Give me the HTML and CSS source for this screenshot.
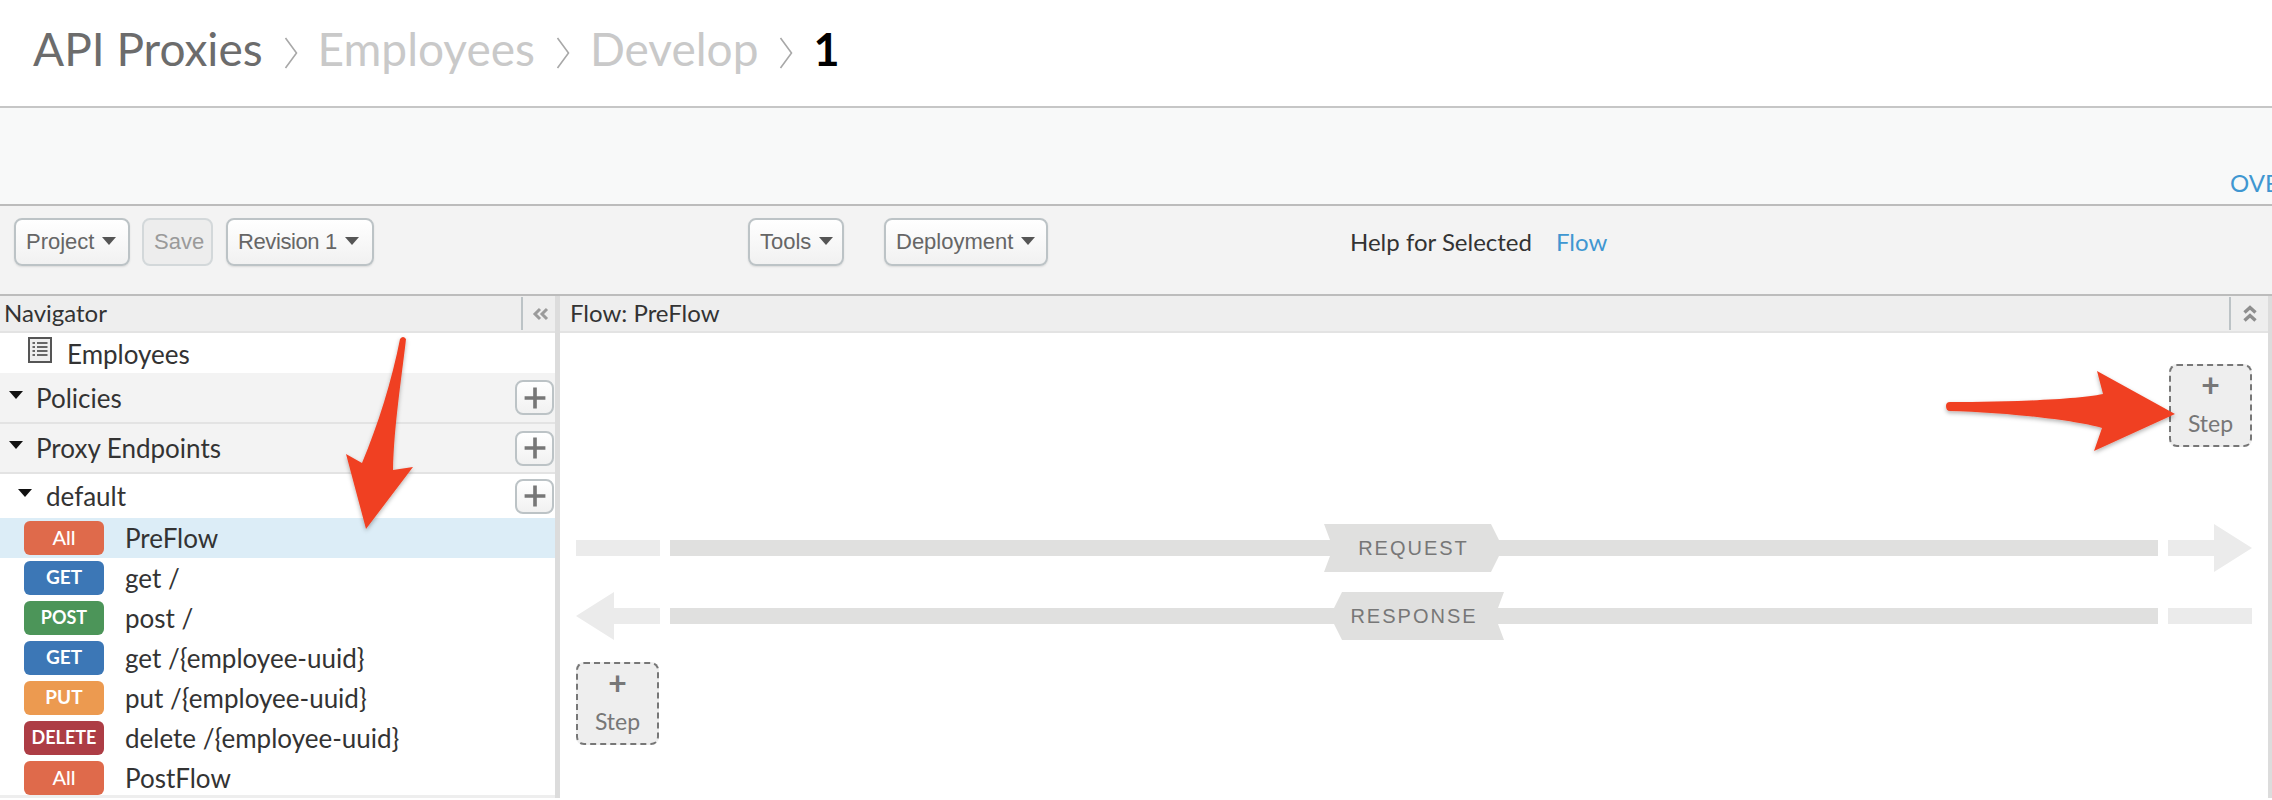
FILE: index.html
```html
<!DOCTYPE html>
<html lang="en">
<head>
<meta charset="utf-8">
<title>API Proxies - Employees - Develop</title>
<link rel="stylesheet" href="styles.css">
</head>
<body>
<div class="page">
  <header class="crumbs">
    <span class="crumb crumb-root">API Proxies</span>
    <svg class="sep" viewBox="0 0 14 32"><path d="M1.5 1 L12.5 16 L1.5 31" /></svg>
    <span class="crumb crumb-mid">Employees</span>
    <svg class="sep" viewBox="0 0 14 32"><path d="M1.5 1 L12.5 16 L1.5 31" /></svg>
    <span class="crumb crumb-mid">Develop</span>
    <svg class="sep" viewBox="0 0 14 32"><path d="M1.5 1 L12.5 16 L1.5 31" /></svg>
    <span class="crumb crumb-cur">1</span>
  </header>
  <div class="band"><a class="overview">OVE</a></div>
  <div class="toolbar">
    <button class="btn btn-project">Project<i class="caret"></i></button>
    <button class="btn btn-save" disabled>Save</button>
    <button class="btn btn-revision">Revision 1<i class="caret"></i></button>
    <button class="btn btn-tools">Tools<i class="caret"></i></button>
    <button class="btn btn-deploy">Deployment<i class="caret"></i></button>
    <span class="help">Help for Selected</span>
    <a class="help-link">Flow</a>
  </div>
  <div class="split">
    <aside class="nav">
      <div class="panel-head">
        <span class="panel-title panel-title-nav">Navigator</span>
        <span class="panel-tool panel-tool-nav">
          <svg viewBox="0 0 18 14" class="tool-icon"><path d="M8 2 L3 7 L8 12 M15 2 L10 7 L15 12"/></svg>
        </span>
      </div>
      <div class="nav-doc">
        <svg class="doc-icon" viewBox="0 0 24 26">
          <rect x="1" y="1" width="22" height="24" class="doc-frame"/>
          <path class="doc-lines" d="M4.5 6 H7 M9 6 H19.5 M4.5 10 H7 M9 10 H19.5 M4.5 14 H7 M9 14 H19.5 M4.5 18 H7 M9 18 H19.5"/>
        </svg>
        <span>Employees</span>
      </div>
      <div class="nav-group nav-group-a">
        <i class="tri"></i><span class="group-name">Policies</span>
        <button class="add"><svg viewBox="0 0 20 20"><path d="M10 2 V18 M2 10 H18"/></svg></button>
      </div>
      <div class="nav-group nav-group-b">
        <i class="tri"></i><span class="group-name">Proxy Endpoints</span>
        <button class="add"><svg viewBox="0 0 20 20"><path d="M10 2 V18 M2 10 H18"/></svg></button>
      </div>
      <div class="nav-sub">
        <i class="tri"></i><span class="group-name">default</span>
        <button class="add"><svg viewBox="0 0 20 20"><path d="M10 2 V18 M2 10 H18"/></svg></button>
      </div>
      <ul class="flows">
        <li class="flow flow-active"><span class="verb verb-all">All</span><span>PreFlow</span></li>
        <li class="flow"><span class="verb verb-get">GET</span><span>get /</span></li>
        <li class="flow"><span class="verb verb-post">POST</span><span>post /</span></li>
        <li class="flow"><span class="verb verb-get">GET</span><span>get /{employee-uuid}</span></li>
        <li class="flow"><span class="verb verb-put">PUT</span><span>put /{employee-uuid}</span></li>
        <li class="flow"><span class="verb verb-delete">DELETE</span><span>delete /{employee-uuid}</span></li>
        <li class="flow"><span class="verb verb-all">All</span><span>PostFlow</span></li>
      </ul>
    </aside>
    <main class="canvas">
      <div class="panel-head">
        <span class="panel-title panel-title-flow">Flow: PreFlow</span>
        <span class="panel-tool panel-tool-flow">
          <svg viewBox="0 0 16 18" class="tool-icon tool-icon-up"><path d="M2.5 7.5 L8 2.5 L13.5 7.5 M2.5 15.5 L8 10.5 L13.5 15.5"/></svg>
        </span>
      </div>
      <div class="lanes">
        <div class="step-row step-row-top">
          <div class="step"><span class="step-plus">+</span><span class="step-name">Step</span></div>
        </div>
        <div class="lane lane-req">
          <i class="stub"></i>
          <div class="track">
            <span class="tag tag-req">REQUEST</span>
          </div>
          <i class="arrow-right"></i>
        </div>
        <div class="lane lane-res">
          <i class="arrow-left"></i>
          <div class="track">
            <span class="tag tag-res">RESPONSE</span>
          </div>
          <i class="stub stub-end"></i>
        </div>
        <div class="step-row step-row-bottom">
          <div class="step"><span class="step-plus">+</span><span class="step-name">Step</span></div>
        </div>
      </div>
    </main>
  </div>
  <svg class="callouts" viewBox="0 0 2272 800" aria-hidden="true">
    <defs>
      <filter id="arrow-shadow" x="-10%" y="-10%" width="120%" height="130%">
        <feDropShadow dx="0" dy="2" stdDeviation="2" flood-color="#000" flood-opacity="0.3"/>
      </filter>
    </defs>
    <path class="callout" filter="url(#arrow-shadow)" d="M400 339 Q403 335 406 339 C402 375 394 425 393 470 L413 467 L366 529 L346 454 L362 463 C378 425 392 380 400 339 Z"/>
    <path class="callout" filter="url(#arrow-shadow)" d="M1950 402 C2000 402 2075 400 2103 394 L2097 371 L2175 414 L2094 451 L2102 428 C2075 420 2000 412 1950 411 Q1946 411 1946 406 Q1946 402 1950 402 Z"/>
  </svg>
</div>
</body>
</html>
```
FILE: styles.css
```css
* { box-sizing: border-box; }
html, body { margin: 0; padding: 0; background: #fff; overflow: hidden; }
body { font-family: "Lato", "Liberation Sans", sans-serif; color: #333; }
.page { position: relative; width: 2272px; height: 800px; overflow: hidden; }

.crumbs { height: 106px; padding: 0 0 8px 33px; display: flex; align-items: center; background: #fff; }
.crumb { font-size: 46px; line-height: 56px; white-space: nowrap; }
.crumb-root { color: #6c6c6c; }
.crumb-mid { color: #c9c9c9; }
.crumb-cur { color: #000; font-weight: 700; font-size: 45px; }
.sep { width: 14px; height: 32px; margin: 8px 20px 0 21px; fill: none; stroke: #a8a8a8; stroke-width: 1.6; flex: none; }

.band { height: 100px; border-top: 2px solid #c6c6c6; border-bottom: 2px solid #bcbcbc; background: #f8f9f9; padding: 61px 0 0 2230px; overflow: hidden; }
.overview { color: #3f97d1; font-size: 24px; line-height: 28px; white-space: nowrap; }

.toolbar { height: 88px; background: #f3f3f3; display: flex; align-items: flex-start; padding: 12px 0 0 14px; }
.btn { height: 48px; border: 2px solid #bcc3c6; border-radius: 8px; background: linear-gradient(#fff, #f1f1f1); box-shadow: 0 1px 2px rgba(0,0,0,.1); font-family: "Liberation Sans", Arial, sans-serif; font-size: 22px; color: #666; padding: 0 0 0 10px; display: flex; align-items: center; text-align: left; flex: none; white-space: nowrap; }
.btn-project { width: 116px; }
.btn-save { width: 71px; margin-left: 12px; background: #ededed; color: #9a9a9a; border-color: #d3d8da; box-shadow: none; }
.btn-revision { width: 148px; margin-left: 13px; letter-spacing: -.4px; }
.btn-tools { width: 96px; margin-left: 374px; }
.btn-deploy { width: 164px; margin-left: 40px; }
.caret { width: 0; height: 0; border-left: 7.5px solid transparent; border-right: 7.5px solid transparent; border-top: 8px solid #555; margin: 0 0 2px 8px; }
.help { margin: 10px 0 0 302px; font-size: 24px; line-height: 28px; color: #333; white-space: nowrap; }
.help-link { margin: 10px 0 0 24px; font-size: 24px; line-height: 28px; color: #3f97d1; }

.split { height: 504px; border-top: 2px solid #bcbcbc; display: flex; background: #dcdcdc; }
.nav { width: 555px; flex: none; background: #fff; border-bottom: 3px solid #eee; }
.canvas { width: 1708px; margin-left: 5px; flex: none; background: #fff; }
.panel-head { height: 37px; background: #eee; border-bottom: 2px solid #e3e3e3; display: flex; align-items: flex-start; justify-content: space-between; }
.panel-title { font-size: 24px; line-height: 32px; color: #333; margin-top: 1px; }
.panel-title-nav { margin-left: 4px; }
.panel-title-flow { margin-left: 10px; }
.panel-tool { width: 35px; height: 33px; margin-top: 1px; border-left: 2px solid #bcc3c6; display: flex; align-items: center; justify-content: center; }
.panel-tool-nav { width: 34px; }
.panel-tool-flow { width: 39px; }
.tool-icon { width: 18px; height: 14px; fill: none; stroke: #9b9b9b; stroke-width: 3; margin-left: 4px; }
.tool-icon-up { width: 16px; height: 18px; stroke: #8e8e8e; stroke-width: 3.4; margin-left: 0; }

.nav-doc { height: 40px; display: flex; align-items: center; padding: 1px 0 0 28px; font-size: 26px; color: #333; }
.doc-icon { width: 24px; height: 26px; margin: -8px 15px 0 0; flex: none; }
.doc-frame { fill: #eee; stroke: #555; stroke-width: 2; }
.doc-lines { fill: none; stroke: #666; stroke-width: 2; }

.nav-group, .nav-sub { display: flex; align-items: center; font-size: 26px; color: #333; padding-right: 1px; }
.nav-group { background: #f3f3f3; border-bottom: 2px solid #e3e3e3; padding-left: 9px; }
.nav-group-a { height: 51px; }
.nav-group-b { height: 50px; }
.nav-sub { height: 44px; padding-left: 18px; background: #fff; }
.tri { width: 0; height: 0; border-left: 7.5px solid transparent; border-right: 7.5px solid transparent; border-top: 8px solid #111; margin: -6px 13px 0 0; flex: none; }
.nav-sub .tri { margin-right: 14px; }
.group-name { flex: 1; }
.add { width: 39px; height: 35px; border: 2px solid #bcc3c6; border-radius: 8px; background: linear-gradient(#fff, #f1f1f1); padding: 0; display: flex; align-items: center; justify-content: center; flex: none; }
.add svg { width: 26px; height: 26px; fill: none; stroke: #777; stroke-width: 2.8; }

.flows { list-style: none; margin: 0; padding: 0; }
.flow { height: 40px; display: flex; align-items: center; font-size: 26px; color: #333; padding-left: 24px; white-space: nowrap; }
.flow-active { background: #dcedf7; }
.verb { width: 80px; height: 34px; border-radius: 6px; color: #fff; font-size: 18px; font-weight: 700; text-align: center; line-height: 32px; margin-right: 21px; flex: none; }
.verb-all { background: #df6a4b; font-size: 20px; font-weight: 500; }
.verb-get { background: #3c77b6; font-size: 19px; }
.verb-post { background: #4c9559; }
.verb-put { background: #ec9a50; font-size: 19px; }
.verb-delete { background: #ad3d45; }

.lanes { padding: 0 16px 0 16px; }
.step-row { display: flex; }
.step-row-top { justify-content: flex-end; padding: 31px 0 0; }
.step-row-bottom { padding-top: 22px; }
.step { width: 83px; height: 83px; border: 2px dashed #777; border-radius: 8px; background: #eee; display: flex; flex-direction: column; align-items: center; color: #777; }
.step-plus { font-size: 32px; line-height: 32px; height: 32px; margin-top: 3px; font-weight: 700; }
.step-name { font-size: 23px; line-height: 28px; margin-top: 8px; }

.lane { height: 48px; display: flex; align-items: center; }
.lane-req { margin-top: 77px; }
.lane-res { margin-top: 20px; }
.track { width: 1488px; height: 16px; margin: 0 10px; background: #e0e0df; position: relative; flex: none; }
.stub { width: 84px; height: 16px; background: #ebebeb; flex: none; }
.arrow-right { width: 84px; height: 48px; background: #ebebeb; flex: none; clip-path: polygon(0 16px, 46px 16px, 46px 0, 84px 24px, 46px 48px, 46px 32px, 0 32px); }
.arrow-left { width: 84px; height: 48px; background: #ebebeb; flex: none; clip-path: polygon(84px 16px, 38px 16px, 38px 0, 0 24px, 38px 48px, 38px 32px, 84px 32px); }
.tag { position: absolute; top: -16px; height: 48px; background: #e0e0df; color: #777; font-family: "Liberation Sans", Arial, sans-serif; font-size: 20px; letter-spacing: 2px; line-height: 48px; text-align: center; white-space: nowrap; }
.tag-req { left: 654px; width: 179px; clip-path: polygon(0 0, 167px 0, 179px 24px, 167px 48px, 0 48px, 9px 24px); }
.tag-res { left: 660px; width: 174px; clip-path: polygon(12px 0, 174px 0, 165px 24px, 174px 48px, 12px 48px, 0 24px); padding-right: 6px; }

.callouts { position: absolute; left: 0; top: 0; width: 2272px; height: 800px; pointer-events: none; }
.callout { fill: #f04124; }
```
